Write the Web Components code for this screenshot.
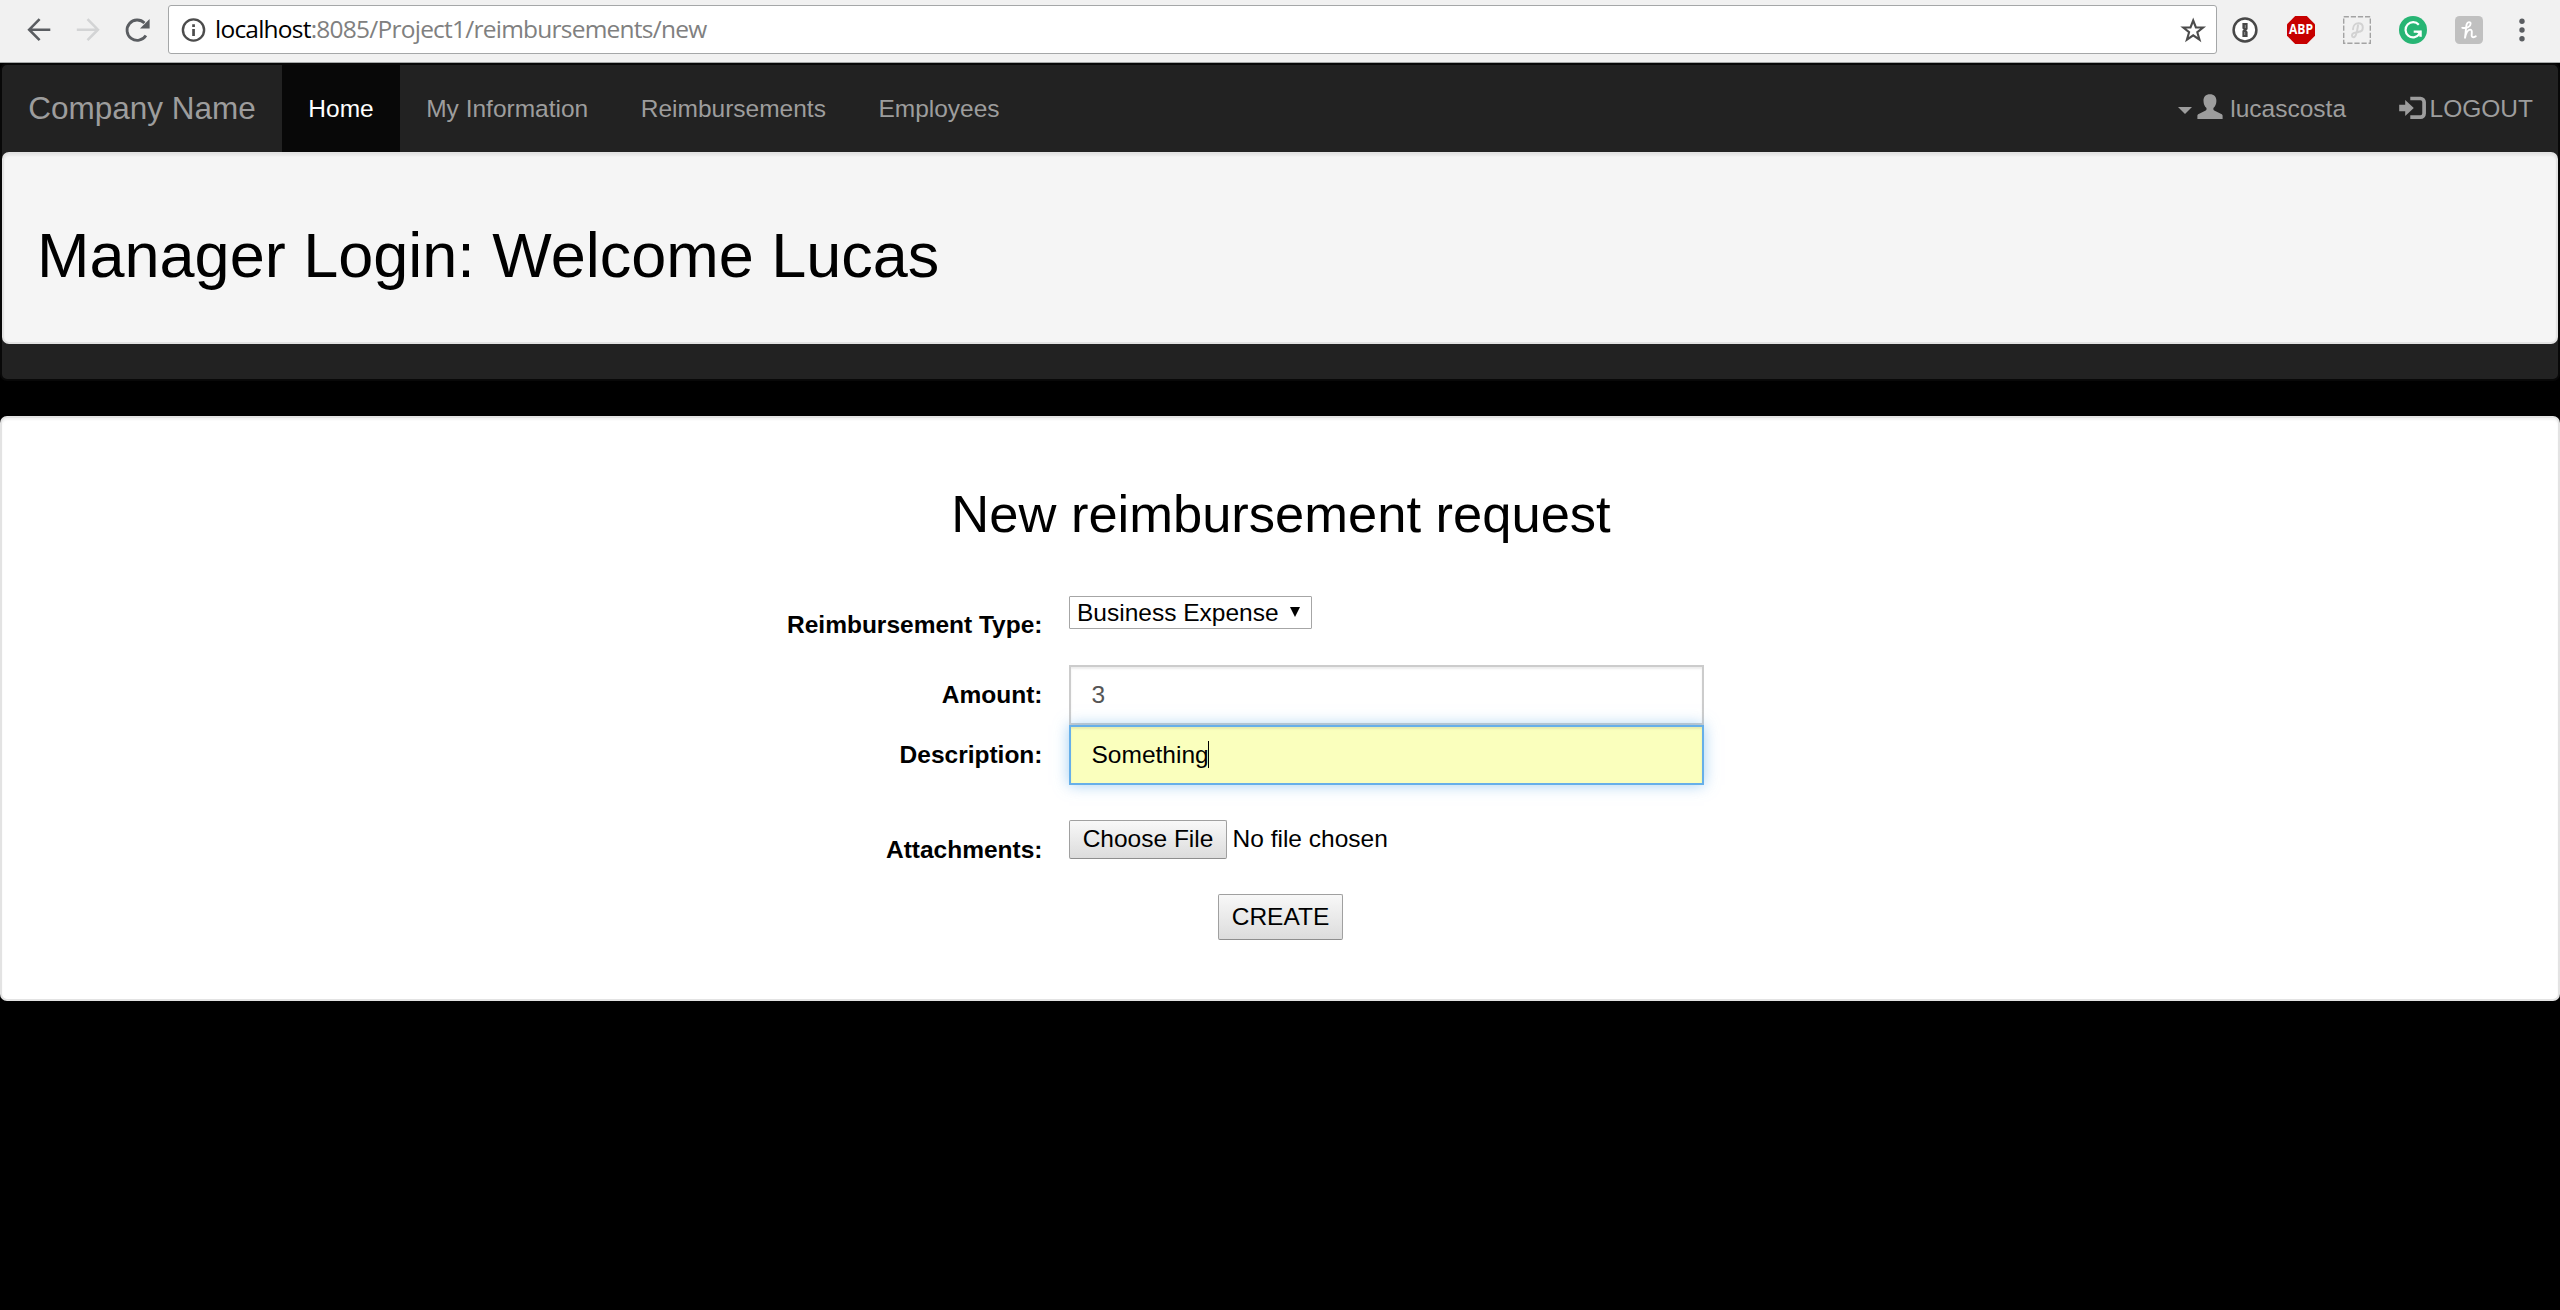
<!DOCTYPE html>
<html lang="en">
<head>
<meta charset="utf-8">
<title>New reimbursement request</title>
<style>
html,body{margin:0;height:100%;background:#000;overflow:hidden}
body{font:24.5px/35px "Liberation Sans",Arial,sans-serif;color:#000}
</style>
</head>
<body>
<reimb-app></reimb-app>
<script>
const define = (name, html) => customElements.define(name, class extends HTMLElement {
  constructor() {
    super();
    const t = document.createElement('template');
    t.innerHTML = html;
    this.attachShadow({ mode: 'open' }).append(t.content.cloneNode(true));
  }
});

define('browser-bar', `
<style>
:host{display:flex;align-items:flex-start;box-sizing:border-box;height:63px;padding:0 24px 0 27px;background:#f1f1f1;border-bottom:1px solid #a5a8a8;flex:none}
svg{display:block;flex:none}
.nav{display:flex;gap:25px;padding-top:17px}
.box{flex:1;display:flex;align-items:center;box-sizing:border-box;height:49px;margin:5px 0 0 17px;padding:0 9px 0 12px;background:#fff;border:1px solid #a5a7a8;border-radius:3px}
.url{flex:1;margin-left:8px;font:24.5px/34px "Open Sans","Noto Sans",sans-serif;letter-spacing:-.77px;color:#808080;white-space:nowrap;padding-bottom:2px}
.url b{font-weight:400;color:#000}
.ext{display:flex;gap:28px;margin-left:14px;padding-top:16px}
.more{margin-left:-3px}
</style>
<div class="nav">
<svg width="24" height="26" viewBox="0 0 24 26" fill="none" stroke="#5a5d61" stroke-width="2.6"><path d="M23.3 12.7H2.5M12.6 2.2L2.2 12.7l10.4 10.4"/></svg>
<svg width="24" height="26" viewBox="0 0 24 26" fill="none" stroke="#d3d4d5" stroke-width="2.6"><path d="M.8 12.7h20.8M11.5 2.2l10.4 10.5-10.4 10.4"/></svg>
<svg width="26" height="26" viewBox="0 0 26 26"><path d="M20.9 18.6A10.2 10.2 0 1 1 19.5 6" fill="none" stroke="#5a5d61" stroke-width="2.8"/><path d="M24.6 2v9.6H15z" fill="#5a5d61"/></svg>
</div>
<div class="box">
<svg width="26" height="26" viewBox="0 0 26 26" style="margin-top:1px"><circle cx="12.5" cy="13" r="10.6" fill="none" stroke="#4c4c4c" stroke-width="2.4"/><path d="M11.2 12h2.7v7h-2.7zM11.2 7.3h2.7v2.7h-2.7z" fill="#4c4c4c"/></svg>
<div class="url"><b>localhost</b>:8085/Project1/reimbursements/new</div>
<svg width="28" height="28" viewBox="0 0 28 28"><path d="M14.2 4.5l2.7 7h7.2l-5.8 4.7 2.2 7.4-6.3-4.3-6.3 4.3 2.2-7.4-5.8-4.7h7.2z" fill="none" stroke="#4c4c4c" stroke-width="2.1"/></svg>
</div>
<div class="ext">
<svg width="28" height="28" viewBox="0 0 28 28"><circle cx="14" cy="14" r="11.4" fill="#fff" stroke="#484848" stroke-width="2.5"/><path d="M11.4 7h5.2v6.3l-1.3 1.2 1.3 1.2V21h-5.2v-6.2l1.3-1.2-1.3-1.2z" fill="#484848"/><path d="M14.3 9v3m-.6 4v3" stroke="#aaa" stroke-width=".8"/></svg>
<svg width="28" height="28" viewBox="0 0 28 28"><path d="M8.2 0h11.6L28 8.2v11.6L19.8 28H8.2L0 19.8V8.2z" fill="#c70000"/><text x="14" y="18.4" text-anchor="middle" textLength="24" lengthAdjust="spacingAndGlyphs" font-family="Open Sans" font-size="13.5" font-weight="700" fill="#fff">ABP</text></svg>
<svg width="28" height="28" viewBox="0 0 28 28" fill="none"><path d="M.7.7h26.6v26.6H.7z" stroke="#a3a3a3" stroke-width="1.4" stroke-dasharray="5.2 1.9"/><path d="M10 13.2C10 9.5 12.6 7.3 15.4 7.3S19.8 9 19.8 11.5 18 15.8 15.3 15.8M15 9.5C14.3 14 13.6 21.2 10.6 21.2 8.6 21.2 8.4 18.3 10.2 17.3 11.6 16.5 13.6 16.6 16.2 15.7" stroke="#d2d2d2" stroke-width="2" stroke-linecap="round"/></svg>
<svg width="28" height="28" viewBox="0 0 28 28" fill="none"><circle cx="14" cy="14" r="14" fill="#27b574"/><path d="M19.8 8.7A7.6 7.6 0 1 0 20.3 18.2" stroke="#fff" stroke-width="2.2"/><path d="M14.7 15.7h6.7v5" stroke="#fff" stroke-width="2.2"/><path d="M22.5 14.6v6.4l-5-5z" fill="#fff"/></svg>
<svg width="28" height="28" viewBox="0 0 28 28" fill="none"><rect width="28" height="28" rx="4.5" fill="#c0c0c0"/><path d="M7.3 11.8C11.5 12.8 15.6 10.700 15.600 7.800 15.600 5.600 12.600 5.400 11.700 8.300 10.800 11.500 10.700 17.500 10 21.700 11 17.300 12.800 13.600 15.200 13.600 18 13.600 16.200 18.500 16.800 20.300 17.300 21.700 19.400 21.400 20.800 20.300" stroke="#fff" stroke-width="1.9" stroke-linecap="round" stroke-linejoin="round"/></svg>
<svg class="more" width="28" height="28" viewBox="0 0 28 28" fill="#5a5d61"><circle cx="14" cy="5.3" r="2.7"/><circle cx="14" cy="14" r="2.7"/><circle cx="14" cy="22.8" r="2.7"/></svg>
</div>`);

define('nav-item', `
<style>
:host{display:flex;align-items:center;padding:0 26.25px;height:87px;color:#9d9d9d;white-space:nowrap}
:host([active]){background:#080808;color:#fff}
:host([brand]){font-size:31.5px}
</style><slot></slot>`);

define('user-icon', `
<style>:host{display:block;width:26px;height:25px;margin:0 7px 4px 5px}svg{display:block}</style>
<svg width="26" height="25" viewBox="0 0 26 25"><path d="M.4 25v-3.2c0-1 .5-1.5 1.3-1.9l7-3.3c.6-.3.8-.7.8-1.4v-1.3C7.6 12.5 6.6 10.1 6.5 7 6.3 2.7 8.8.2 12.9.2s6.7 2.5 6.5 6.8c-.1 3.1-1.100 5.500-3 6.900v1.300c0 .7.3 1.100.8 1.400l7.100 3.300c.8.4 1.300.9 1.300 1.900V25z" fill="#9d9d9d"/></svg>`);

define('logout-icon', `
<style>:host{display:block;width:28px;height:24px;margin:0 3px 2px 0}svg{display:block}</style>
<svg width="28" height="24" viewBox="0 0 28 24"><path d="M.2 8.7h6V4l8.600 8-8.600 8v-4.700h-6z" fill="#9d9d9d"/><path d="M11.300 2.500H21.500A3.600 3.600 0 0 1 25.100 6v11.600a3.600 3.600 0 0 1-3.600 3.600H11.300" fill="none" stroke="#9d9d9d" stroke-width="3.700"/></svg>`);

define('site-header', `
<style>
:host{display:block;box-sizing:border-box;height:318px;background:#222;border:2px solid #080808;border-radius:7px;flex:none}
nav{display:flex;height:87px}
.gap{flex:1}
.caret{border:7px solid transparent;border-top-color:#9d9d9d;border-bottom:0;margin-top:3px}
.out{padding-right:25px}
.well{display:flex;align-items:flex-start;box-sizing:border-box;height:192px;padding:67px 33px 0;background:#f5f5f5;border:2px solid #e3e3e3;border-radius:7px;box-shadow:inset 0 2px 2px rgba(0,0,0,.05)}
h1{margin:0;font-size:63px;line-height:69px;font-weight:400}
</style>
<nav>
<nav-item brand>Company Name</nav-item><nav-item active>Home</nav-item><nav-item>My Information</nav-item><nav-item>Reimbursements</nav-item><nav-item>Employees</nav-item>
<div class="gap"></div>
<nav-item><i class="caret"></i><user-icon></user-icon><span>lucascosta</span></nav-item><nav-item class="out"><logout-icon></logout-icon><span>LOGOUT</span></nav-item>
</nav>
<div class="well"><h1>Manager Login: Welcome Lucas</h1></div>`);

define('form-row', `
<style>
:host{display:flex;gap:26.5px;align-items:flex-start}
.label{width:1040.5px;padding-top:var(--label-top,12px);text-align:right;font-weight:700;flex:none}
</style>
<div class="label"><slot name="label"></slot></div><slot></slot>`);

define('text-field', `
<style>
:host{display:flex;align-items:center;box-sizing:border-box;width:635px;height:60px;padding:0 20.5px 1px;border:2px solid #ccc;background:#fff;color:#555;box-shadow:inset 0 2px 2px rgba(0,0,0,.075)}
:host([focused]){border-color:#66afe9;background:#faffbd;color:#000;position:relative;box-shadow:inset 0 2px 2px rgba(0,0,0,.075),0 0 14px rgba(102,175,233,.6)}
i{display:none;width:1px;height:27px;background:#000;margin-left:-1px}
:host([focused]) i{display:block}
</style><span><slot></slot></span><i></i>`);

define('select-box', `
<style>
:host{display:flex;align-items:center;box-sizing:border-box;width:243px;height:33px;padding:0 0 0 7px;border:1px solid #a6a6a6;border-radius:1px;white-space:nowrap}
svg{margin:0 0 2px 11px}
</style><span><slot></slot></span><svg width="10" height="10" viewBox="0 0 10 10"><path d="M0 0h10L5 10z"/></svg>`);

define('push-button', `
<style>
:host{display:flex;align-items:center;justify-content:center;box-sizing:border-box;border:1px solid #a0a0a0;border-bottom-color:#8e8e8e;border-radius:2px;background:linear-gradient(#f8f8f8,#dcdcdc);white-space:nowrap}
</style><span><slot></slot></span>`);

define('request-form', `
<style>
:host{display:block;box-sizing:border-box;height:585px;margin-top:35px;padding-top:67px;background:#fff;border:2px solid #e3e3e3;border-radius:7px;box-shadow:inset 0 2px 2px rgba(0,0,0,.05);flex:none}
h2{margin:0 0 53px;padding-left:2px;text-align:center;font-size:52.5px;line-height:58px;font-weight:400}
.type{height:69px;--label-top:11px}
.file{margin-top:35px;height:74px}
.choose{width:158px;height:39px;padding-bottom:2px}
.none{margin:1px 0 0 -21px}
.actions{display:flex;justify-content:center}
.create{width:125px;height:46px;padding:0 0 1px 1px}
</style>
<h2>New reimbursement request</h2>
<form-row class="type"><span slot="label">Reimbursement Type:</span><select-box>Business Expense</select-box></form-row>
<form-row><span slot="label">Amount:</span><text-field>3</text-field></form-row>
<form-row><span slot="label">Description:</span><text-field focused>Something</text-field></form-row>
<form-row class="file"><span slot="label">Attachments:</span><push-button class="choose">Choose File</push-button><span class="none">No file chosen</span></form-row>
<div class="actions"><push-button class="create">CREATE</push-button></div>`);

define('reimb-app', `
<style>:host{display:flex;flex-direction:column;height:1310px;background:#000}</style>
<browser-bar></browser-bar><site-header></site-header><request-form></request-form>`);
</script>
</body>
</html>
